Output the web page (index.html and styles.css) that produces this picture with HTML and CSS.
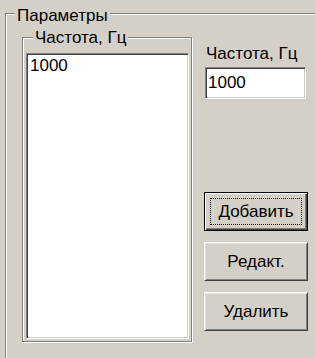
FILE: index.html
```html
<!DOCTYPE html>
<html lang="ru">
<head>
    <meta charset="UTF-8">
    <title>Параметры</title>
    <link rel="stylesheet" href="styles.css">
</head>
<body>
    <fieldset class="group group-main">
        <legend class="group-title title-main">Параметры</legend>
        <div class="params">
            <fieldset class="group group-freq">
                <legend class="group-title title-freq">Частота, Гц</legend>
                <div class="listbox">
                    <div class="list-item">1000</div>
                </div>
            </fieldset>

            <div class="side">
                <label class="field-label" for="freq">Частота, Гц</label>
                <input class="edit" type="text" id="freq" value="1000">
                <div class="buttons">
                    <button class="btn btn-default" type="button"><span class="focus-rect">Добавить</span></button>
                    <button class="btn" type="button">Редакт.</button>
                    <button class="btn" type="button">Удалить</button>
                </div>
            </div>
        </div>
    </fieldset>
</body>
</html>
```

FILE: styles.css
```css
body {
    margin: 0;
    height: 358px;
    overflow: hidden;
    background-color: #d4d0c8;
    color: #000;
    font-family: "Liberation Sans", Arial, sans-serif;
    font-size: 17px;
    line-height: 19px;
}

/* рамка группы (etched) */
.group {
    margin: 0;
    padding: 0;
    min-width: 0;
    border: 1px solid #808080;
    box-shadow: inset 1px 1px 0 #fff, 1px 1px 0 #fff;
    box-sizing: border-box;
}

.group-title {
    padding: 0 2px;
    background-color: #d4d0c8;
    line-height: 19px;
}

/* правая и нижняя стороны рамки уходят за край окна */
.group-main {
    margin: 2px 0 0 5px;
    width: 310px;
    height: 356px;
    border-right: none;
    border-bottom: none;
    box-shadow: inset 1px 1px 0 #fff;
}

.title-main {
    margin-left: 9px;
    padding-top: 4px;
}

.params {
    display: flex;
    align-items: flex-start;
    padding: 3px 0 0 16px;
}

.group-freq {
    width: 170px;
    padding: 6px 2px 2px 3px;
}

.title-freq {
    margin-left: 7px;
}

.listbox {
    height: 286px;
    padding: 2px 3px;
    box-sizing: border-box;
    background-color: #fff;
    border: 1px solid;
    border-color: #808080 #fff #fff #808080;
    box-shadow: inset 1px 1px 0 #404040, inset -1px -1px 0 #d4d0c8;
}

.side {
    display: flex;
    flex-direction: column;
    align-items: flex-start;
    margin-left: 12px;
}

.field-label {
    margin-top: 16px;
    padding-left: 2px;
}

.edit {
    width: 101px;
    height: 32px;
    margin: 4px 0 0 1px;
    padding: 0 2px;
    box-sizing: border-box;
    background-color: #fff;
    color: #000;
    font: inherit;
    border: 1px solid;
    border-color: #808080 #fff #fff #808080;
    box-shadow: inset 1px 1px 0 #404040, inset -1px -1px 0 #d4d0c8;
    outline: none;
}

.buttons {
    display: flex;
    flex-direction: column;
    gap: 11px;
    margin-top: 93px;
}

.btn {
    display: flex;
    justify-content: center;
    align-items: center;
    width: 104px;
    height: 39px;
    padding: 0;
    box-sizing: border-box;
    background-color: #d4d0c8;
    color: #000;
    font: inherit;
    border: 1px solid;
    border-color: #fff #404040 #404040 #fff;
    box-shadow: inset 1px 1px 0 #e6e4df, inset -1px -1px 0 #808080;
}

.btn-default {
    padding: 5px;
    border-color: #000;
    box-shadow: inset 1px 1px 0 #fff, inset -1px -1px 0 #404040, inset -2px -2px 0 #808080;
}

.focus-rect {
    display: flex;
    justify-content: center;
    align-items: center;
    width: 100%;
    height: 100%;
    border: 1px dotted #000;
    box-sizing: border-box;
}
```
